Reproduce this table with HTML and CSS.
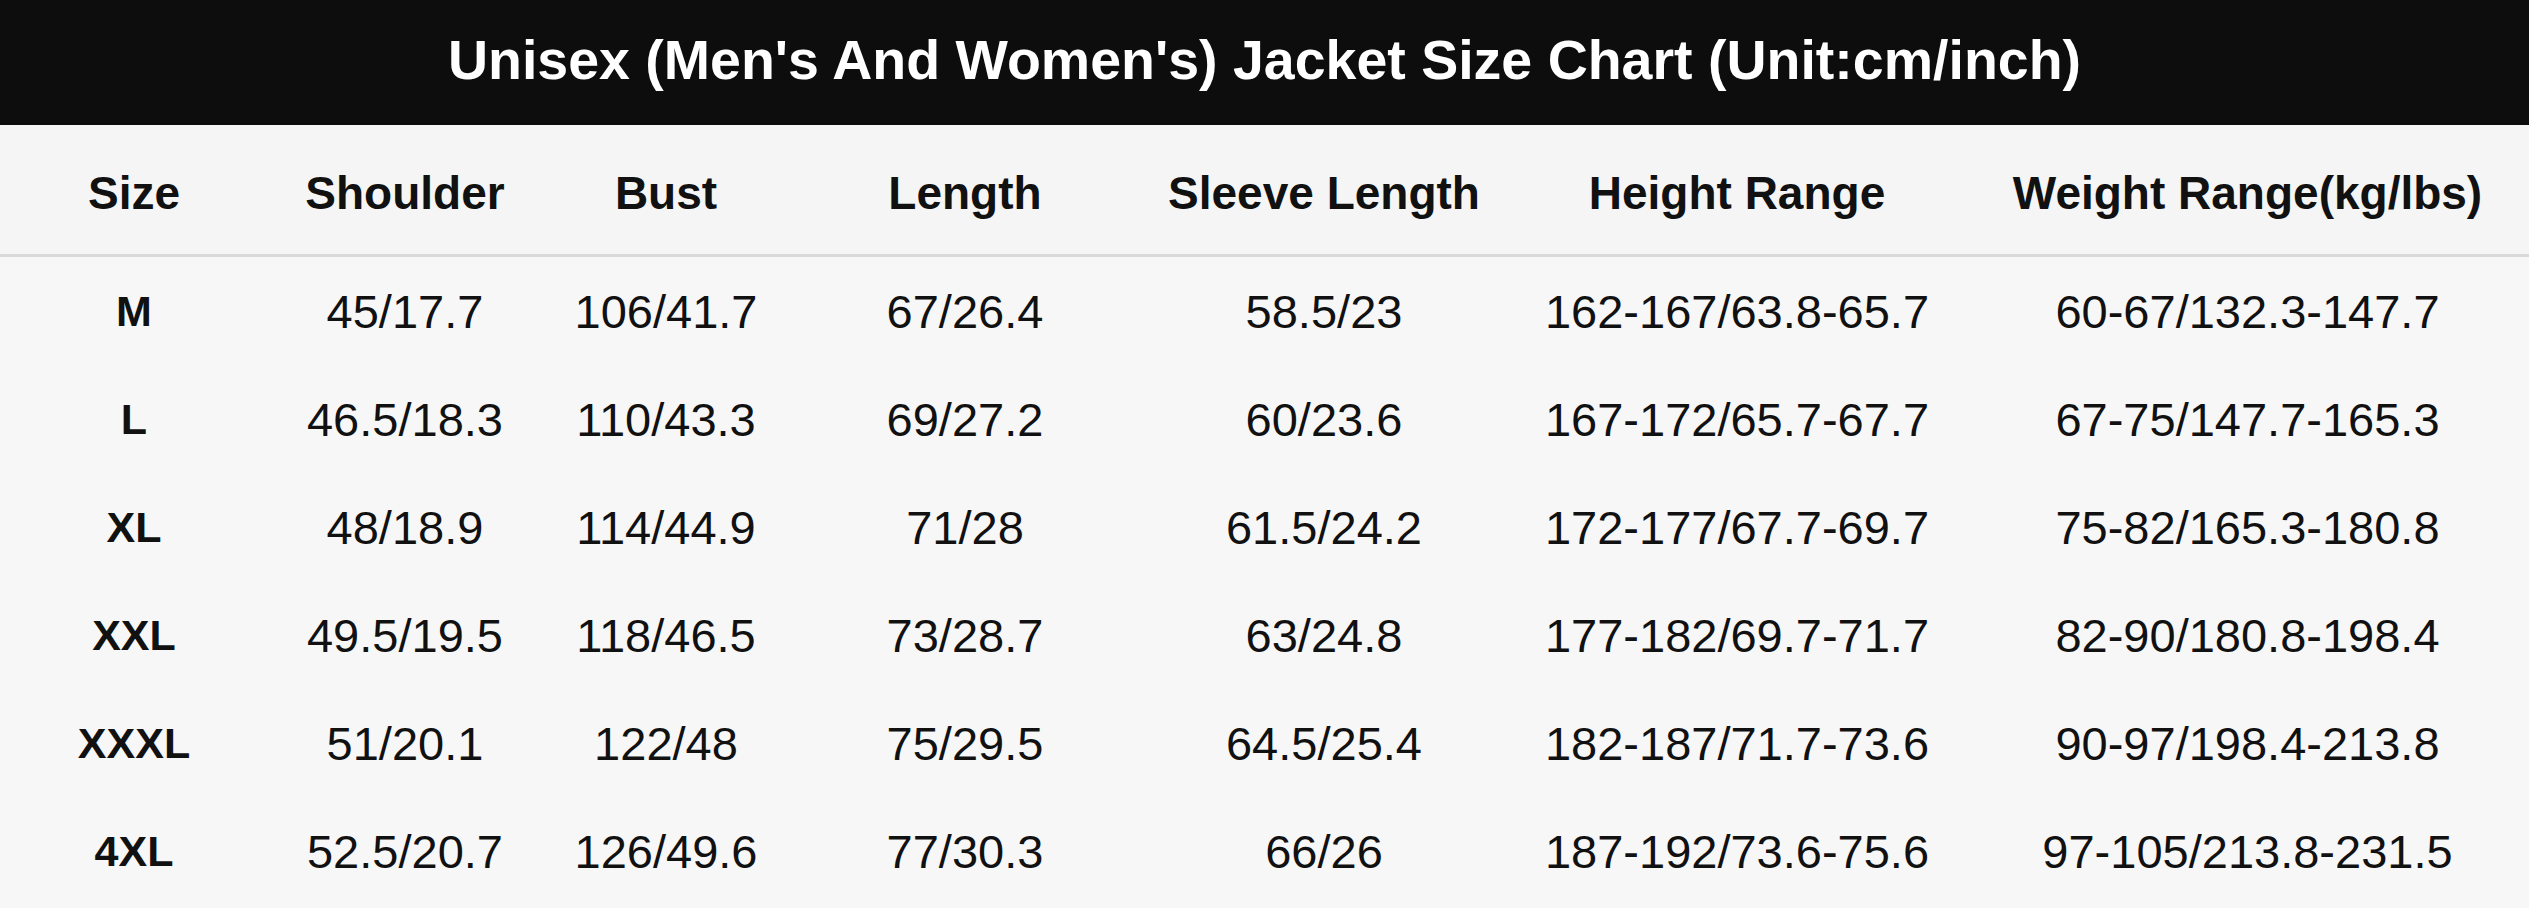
FILE: index.html
```html
<!DOCTYPE html>
<html>
<head>
<meta charset="utf-8">
<link rel="stylesheet" href="styles.css">
</head>
<body>
<div class="chart">
  <div class="title">Unisex (Men's And Women's) Jacket Size Chart (Unit:cm/inch)</div>
  <div class="grid head">
    <div>Size</div><div>Shoulder</div><div>Bust</div><div>Length</div><div>Sleeve Length</div><div>Height Range</div><div>Weight Range(kg/lbs)</div>
  </div>
  <div class="grid row">
    <div class="sz">M</div><div>45/17.7</div><div>106/41.7</div><div>67/26.4</div><div>58.5/23</div><div>162-167/63.8-65.7</div><div>60-67/132.3-147.7</div>
  </div>
  <div class="grid row">
    <div class="sz">L</div><div>46.5/18.3</div><div>110/43.3</div><div>69/27.2</div><div>60/23.6</div><div>167-172/65.7-67.7</div><div>67-75/147.7-165.3</div>
  </div>
  <div class="grid row">
    <div class="sz">XL</div><div>48/18.9</div><div>114/44.9</div><div>71/28</div><div>61.5/24.2</div><div>172-177/67.7-69.7</div><div>75-82/165.3-180.8</div>
  </div>
  <div class="grid row">
    <div class="sz">XXL</div><div>49.5/19.5</div><div>118/46.5</div><div>73/28.7</div><div>63/24.8</div><div>177-182/69.7-71.7</div><div>82-90/180.8-198.4</div>
  </div>
  <div class="grid row">
    <div class="sz">XXXL</div><div>51/20.1</div><div>122/48</div><div>75/29.5</div><div>64.5/25.4</div><div>182-187/71.7-73.6</div><div>90-97/198.4-213.8</div>
  </div>
  <div class="grid row">
    <div class="sz">4XL</div><div>52.5/20.7</div><div>126/49.6</div><div>77/30.3</div><div>66/26</div><div>187-192/73.6-75.6</div><div>97-105/213.8-231.5</div>
  </div>
</div>
</body>
</html>
```
FILE: styles.css
```css
html, body {
  margin: 0;
  padding: 0;
  background: #f7f7f7;
}
.chart {
  width: 2529px;
  height: 908px;
  overflow: hidden;
  font-family: "Liberation Sans", Arial, sans-serif;
  color: #111;
}
.title {
  height: 125px;
  box-sizing: border-box;
  padding-bottom: 6px;
  background: #0d0d0d;
  color: #fff;
  font-size: 55.5px;
  font-weight: 700;
  display: flex;
  align-items: center;
  justify-content: center;
}
.grid {
  display: grid;
  grid-template-columns: 268px 274px 248px 350px 368px 458px 1fr;
  align-items: center;
  justify-items: center;
}
.head {
  height: 132px;
  box-sizing: border-box;
  padding-top: 6px;
  background: #f5f5f5;
  border-bottom: 3px solid #d9d9d9;
  font-size: 46px;
  font-weight: 700;
}
.row {
  height: 108px;
  font-size: 47px;
}
.sz {
  font-weight: 700;
  font-size: 43px;
}
```
